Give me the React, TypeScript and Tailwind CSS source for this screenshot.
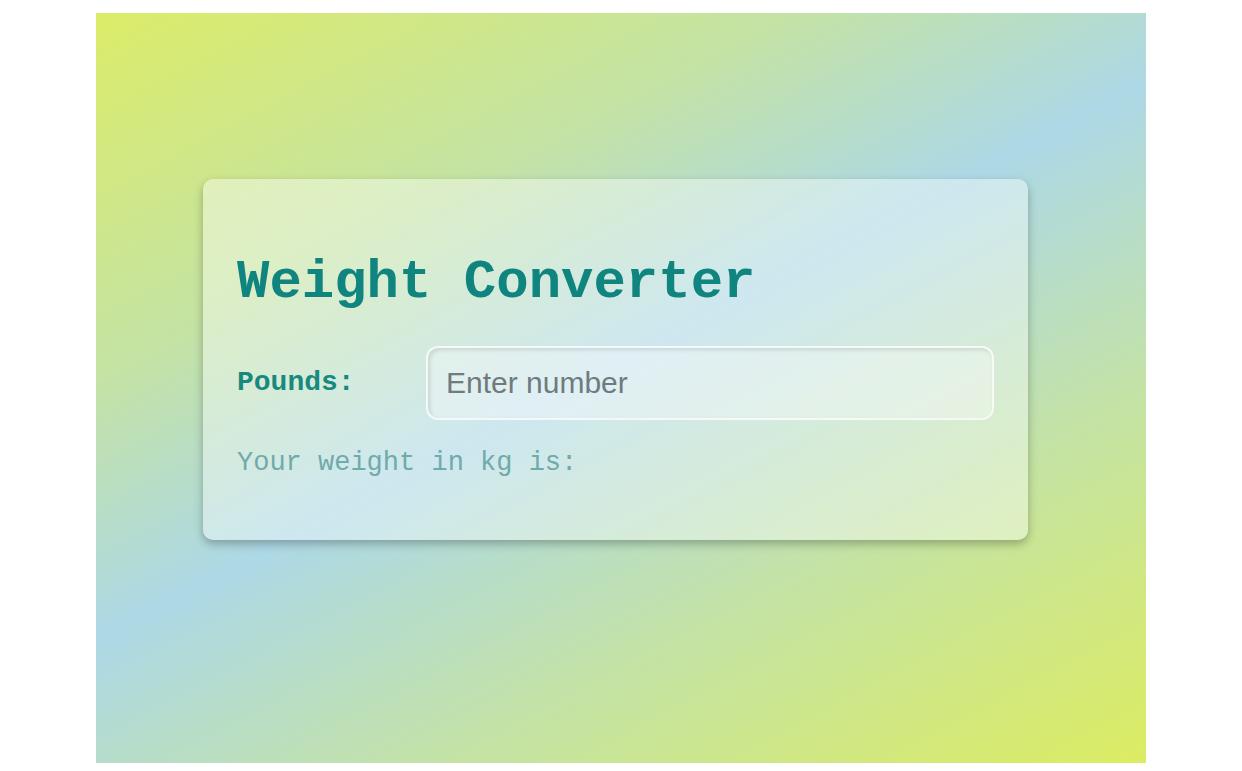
import React from "react";

export default function App() {
  return (
    <div className="min-h-screen bg-white pt-[13px]">
      <div className="mx-auto h-[750px] w-[1050px] bg-[linear-gradient(152deg,#dcec68_0%,#c4e3a4_28%,#add8e6_48%,#c4e3a4_72%,#dcec62_100%)] pl-[107px] pt-[166px]">
        <div className="w-[825px] rounded-[10px] bg-white/40 px-[34px] pb-[61px] pt-[75px] shadow-[0_4px_10px_rgba(0,0,0,0.28)] font-['Liberation_Mono','Courier_New',monospace]">
          <h1 className="text-[54px] font-bold leading-[58px] text-[#10857f]">Weight Converter</h1>
          <div className="mt-[34px] flex items-center">
            <label className="w-[189px] text-[28px] font-bold leading-[32px] text-[#17897f]">Pounds:</label>
            <input
              type="text"
              placeholder="Enter number"
              className="h-[74px] flex-1 rounded-[12px] border-2 border-white/60 bg-white/35 pl-[18px] font-['Liberation_Sans',Arial,sans-serif] text-[30px] text-gray-700 shadow-[inset_2px_2px_4px_rgba(0,0,0,0.12)] outline-none placeholder:text-[#6f7b7d]"
            />
          </div>
          <p className="mt-[28px] text-[27px] leading-[31px] text-[#70aaab]">Your weight in kg is:</p>
        </div>
      </div>
    </div>
  );
}
